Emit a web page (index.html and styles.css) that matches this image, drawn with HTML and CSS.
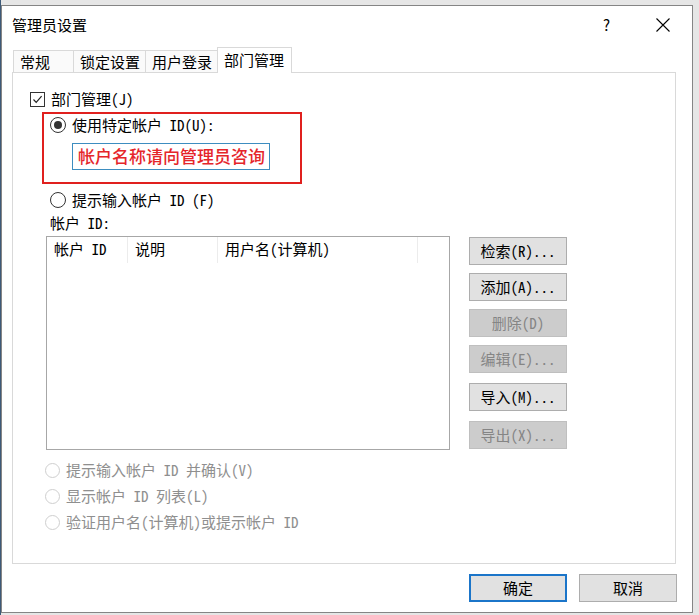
FILE: index.html
```html
<!DOCTYPE html>
<html lang="zh-CN">
<head>
<meta charset="utf-8">
<title>管理员设置</title>
<link rel="stylesheet" href="styles.css">
</head>
<body>
<div class="dialog">
  <div class="titlebar">
    <span class="title">管理员设置</span>
    <span class="help">?</span>
    <span class="close"><svg width="14" height="14" viewBox="0 0 14 14"><path d="M0.5 0.5 L13.5 13.5 M13.5 0.5 L0.5 13.5" stroke="#000" stroke-width="1.1" fill="none"/></svg></span>
  </div>
  <div class="tabs">
    <div class="tab t1">常规</div>
    <div class="tab t2">锁定设置</div>
    <div class="tab t3">用户登录</div>
    <div class="tab sel">部门管理</div>
  </div>
  <div class="panel">
    <div class="row">
      <span class="checkbox"><svg width="13" height="13" viewBox="0 0 13 13"><path d="M2.5 6.5 L5.2 9.3 L10.6 3.2" stroke="#222" stroke-width="1.2" fill="none"/></svg></span>
      <span class="label">部门管理(J)</span>
    </div>
    <div class="redbox">
      <div class="row">
        <span class="radio on"></span>
        <span class="label">使用特定帐户 ID(U):</span>
      </div>
      <div class="input">帐户名称请向管理员咨询</div>
    </div>
    <div class="row indent r2">
      <span class="radio"></span>
      <span class="label">提示输入帐户 ID (F)</span>
    </div>
    <div class="row indent lbl">帐户 ID:</div>
    <div class="listarea">
      <div class="listview">
        <div class="header">
          <div class="col c1">帐户 ID</div>
          <div class="col c2">说明</div>
          <div class="col c3">用户名(计算机)</div>
          <div class="col c4"></div>
        </div>
      </div>
      <div class="btns">
        <div class="btn b1">检索(R)...</div>
        <div class="btn b2">添加(A)...</div>
        <div class="btn b3 disabled">删除(D)</div>
        <div class="btn b4 disabled">编辑(E)...</div>
        <div class="btn b5">导入(M)...</div>
        <div class="btn b6 disabled">导出(X)...</div>
      </div>
    </div>
    <div class="row dis first">
      <span class="radio off"></span>
      <span class="label">提示输入帐户 ID 并确认(V)</span>
    </div>
    <div class="row dis">
      <span class="radio off"></span>
      <span class="label">显示帐户 ID 列表(L)</span>
    </div>
    <div class="row dis">
      <span class="radio off"></span>
      <span class="label">验证用户名(计算机)或提示帐户 ID</span>
    </div>
  </div>
  <div class="footer">
    <div class="btn fbtn ok">确定</div>
    <div class="btn fbtn">取消</div>
  </div>
</div>
</body>
</html>
```
FILE: styles.css
```css
* { box-sizing: border-box; }
html, body { margin: 0; padding: 0; }
body {
  width: 699px;
  height: 615px;
  overflow: hidden;
  background: linear-gradient(to right, #3d5a78 0, #3d5a78 1px, #e6e6e6 1px);
  font-family: "Noto Sans Mono CJK SC", "Noto Sans CJK SC", sans-serif;
  font-size: 15px;
  color: #000;
  padding-top: 5px;
  padding-left: 1px;
}
.dialog {
  width: 692px;
  height: 608px;
  background: #fff;
  border: 1px solid #858585;
  display: flex;
  flex-direction: column;
}
.titlebar {
  height: 40px;
  display: flex;
  align-items: flex-start;
}
.title {
  font-family: "Noto Sans CJK SC", sans-serif;
  font-size: 15px;
  line-height: 20px;
  margin-top: 9px;
  margin-left: 10px;
  flex: 1;
}
.help {
  font-family: "Noto Sans CJK SC", sans-serif;
  font-size: 15px;
  line-height: 20px;
  margin-top: 9px;
  width: 10px;
}
.close {
  margin-top: 12px;
  margin-left: 43px;
  margin-right: 22px;
  width: 14px;
  height: 14px;
  display: flex;
}
.tabs {
  height: 26px;
  display: flex;
  align-items: flex-end;
  padding-left: 11px;
}
.tab {
  height: 22px;
  line-height: 20px;
  padding-top: 1px;
  padding-left: 6px;
  border: 1px solid #d9d9d9;
  border-bottom: none;
  border-right: none;
  background: #fafafa;
  white-space: nowrap;
}
.t1 { width: 60px; }
.t2 { width: 72px; }
.t3 { width: 72px; }
.tab.sel {
  width: 75px;
  height: 26px;
  padding-top: 2px;
  margin-bottom: -1px;
  border-right: 1px solid #d9d9d9;
  background: #fff;
  position: relative;
  z-index: 1;
}
.panel {
  margin-left: 10px;
  width: 664px;
  height: 492px;
  border: 1px solid #d9d9d9;
  padding: 16px 0 0 17px;
}
.row {
  height: 20px;
  line-height: 20px;
  display: flex;
  align-items: center;
  white-space: nowrap;
}
.checkbox {
  width: 15px;
  height: 15px;
  border: 1px solid #333;
  display: flex;
  align-items: center;
  justify-content: center;
  margin-right: 6px;
}
.radio {
  width: 16px;
  height: 16px;
  border: 1px solid #333;
  border-radius: 50%;
  margin-right: 6px;
  display: flex;
  align-items: center;
  justify-content: center;
  flex: none;
}
.radio.on::after {
  content: "";
  width: 8px;
  height: 8px;
  border-radius: 50%;
  background: #333;
}
.redbox {
  margin-top: 3px;
  margin-left: 12px;
  width: 260px;
  height: 72px;
  border: 2px solid #e0201e;
  padding: 1px 0 0 6px;
}
.input {
  margin-top: 8px;
  margin-left: 22px;
  width: 198px;
  height: 27px;
  border: 1px solid #3d8dc0;
  padding-left: 5px;
  font-family: "Noto Sans CJK SC", sans-serif;
  font-size: 17px;
  font-weight: 500;
  line-height: 24px;
  color: #e5252a;
  white-space: nowrap;
  overflow: hidden;
}
.indent { margin-left: 20px; }
.r2 { margin-top: 6px; }
.lbl { margin-top: 3px; }
.listarea {
  margin-top: 3px;
  display: flex;
  align-items: flex-start;
}
.listview {
  margin-left: 16px;
  width: 404px;
  height: 214px;
  border: 1px solid #a7a7a7;
  background: #fff;
}
.header {
  height: 26px;
  display: flex;
}
.col {
  height: 26px;
  line-height: 24px;
  padding-left: 7px;
  border-right: 1px solid #ececec;
  white-space: nowrap;
}
.c1 { width: 81px; }
.c2 { width: 90px; }
.c3 { width: 200px; }
.c4 { width: 0; flex: 1; border-right: none; }
.btns {
  margin-left: 19px;
  display: flex;
  flex-direction: column;
}
.btn {
  width: 98px;
  height: 28px;
  border: 1px solid #adadad;
  background: #e1e1e1;
  display: flex;
  align-items: center;
  justify-content: center;
  line-height: 20px;
  white-space: nowrap;
}
.btn.disabled {
  background: #cccccc;
  border-color: #bfbfbf;
  color: #858585;
}
.b1 { margin-top: 1px; }
.b2, .b3, .b4 { margin-top: 8px; }
.b5, .b6 { margin-top: 10px; }
.dis {
  margin-left: 15px;
  margin-top: 6px;
  color: #8f8f8f;
}
.dis.first { margin-top: 10px; }
.radio.off {
  width: 15px;
  height: 15px;
  border-color: #cfcfcf;
}
.footer {
  margin-top: 10px;
  display: flex;
  justify-content: flex-end;
  gap: 12px;
  padding-right: 15px;
}
.fbtn { height: 28px; }
.fbtn.ok { border: 2px solid #1b75c9; }
```
